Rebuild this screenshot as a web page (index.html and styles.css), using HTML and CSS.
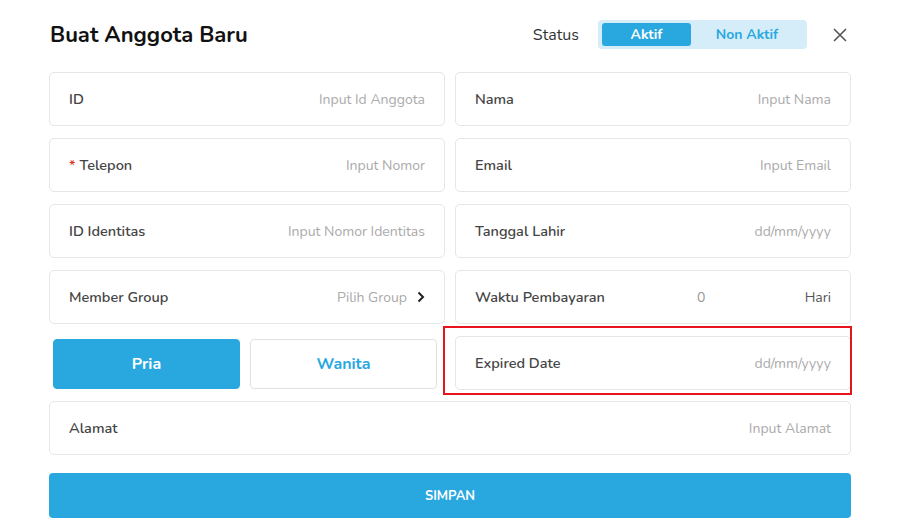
FILE: index.html
```html
<!DOCTYPE html>
<html lang="en">
<head>
    <meta charset="UTF-8">
    <title>Buat Anggota Baru</title>
    <link rel="stylesheet" href="styles.css">
</head>
<body>
    <div class="modal">
        <div class="modal-header">
            <div class="modal-title">Buat Anggota Baru</div>
            <div class="status">
                <span class="status-label">Status</span>
                <div class="status-toggle">
                    <span class="toggle-btn active">Aktif</span>
                    <span class="toggle-btn">Non Aktif</span>
                </div>
                <svg class="close-icon" width="14" height="14" viewBox="0 0 14 14">
                    <path d="M1 1 L13 13 M13 1 L1 13" stroke="#555" stroke-width="1.6" fill="none"/>
                </svg>
            </div>
        </div>

        <div class="form-grid">
            <div class="field">
                <span class="field-label">ID</span>
                <span class="field-value">Input Id Anggota</span>
            </div>
            <div class="field">
                <span class="field-label">Nama</span>
                <span class="field-value">Input Nama</span>
            </div>
            <div class="field">
                <span class="field-label"><span class="required">*</span> Telepon</span>
                <span class="field-value">Input Nomor</span>
            </div>
            <div class="field">
                <span class="field-label">Email</span>
                <span class="field-value">Input Email</span>
            </div>
            <div class="field">
                <span class="field-label">ID Identitas</span>
                <span class="field-value">Input Nomor Identitas</span>
            </div>
            <div class="field">
                <span class="field-label">Tanggal Lahir</span>
                <span class="field-value">dd/mm/yyyy</span>
            </div>
            <div class="field">
                <span class="field-label">Member Group</span>
                <span class="field-value">Pilih Group
                    <svg class="chevron" width="8" height="12" viewBox="0 0 8 12">
                        <path d="M1.5 1.5 L6 6 L1.5 10.5" stroke="#222" stroke-width="2" fill="none"/>
                    </svg>
                </span>
            </div>
            <div class="field">
                <span class="field-label">Waktu Pembayaran</span>
                <span class="field-days">0</span>
                <span class="field-unit">Hari</span>
            </div>
            <div class="gender">
                <div class="gender-btn selected">Pria</div>
                <div class="gender-btn">Wanita</div>
            </div>
            <div class="field highlighted">
                <span class="field-label">Expired Date</span>
                <span class="field-value">dd/mm/yyyy</span>
            </div>
            <div class="field wide">
                <span class="field-label">Alamat</span>
                <span class="field-value">Input Alamat</span>
            </div>
        </div>

        <button class="save-btn">SIMPAN</button>
    </div>
</body>
</html>
```

FILE: styles.css
```css
body {
    margin: 0;
    background: #fff;
    font-family: 'Nunito', 'Lato', 'Open Sans', sans-serif;
    color: #444;
}

.modal {
    width: 802px;
    padding: 20px 0 0 49px;
}

.modal-header {
    display: flex;
    align-items: center;
    justify-content: space-between;
    height: 29px;
    margin-bottom: 23px;
}

.modal-title {
    font-size: 22px;
    font-weight: 700;
    color: #111;
    padding-left: 1px;
}

.status {
    display: flex;
    align-items: center;
}

.status-label {
    font-size: 16px;
    color: #333;
    margin-right: 19px;
}

.status-toggle {
    display: flex;
    width: 201px;
    height: 23px;
    padding: 3px 4px;
    background: #d5edf9;
    border-radius: 4px;
}

.toggle-btn {
    flex: 1;
    display: flex;
    align-items: center;
    justify-content: center;
    font-size: 14px;
    font-weight: 700;
    color: #29a8df;
    border-radius: 3px;
}

.toggle-btn.active {
    flex: 0 0 89px;
    background: #29a8df;
    color: #fff;
}

.close-icon {
    margin-left: 26px;
    margin-right: 4px;
}

.form-grid {
    display: grid;
    grid-template-columns: 1fr 1fr;
    column-gap: 10px;
    row-gap: 12px;
}

.field {
    position: relative;
    display: flex;
    align-items: center;
    justify-content: space-between;
    height: 52px;
    padding: 0 19px 0 19px;
    border: 1px solid #e6e6e6;
    border-radius: 5px;
    font-size: 14px;
}

.field.wide {
    grid-column: 1 / 3;
    margin-top: -1px;
}

.field-label {
    font-size: 14.5px;
    font-weight: 600;
    color: #444;
}

.required {
    color: #e0302a;
}

.field-value {
    display: flex;
    align-items: center;
    color: #aaa;
}

.chevron {
    margin-left: 10px;
}

.field-days {
    color: #999;
    margin-left: 92px;
}

.field-unit {
    color: #555;
    margin-left: auto;
}

.highlighted::after {
    content: "";
    position: absolute;
    top: -11px;
    left: -13px;
    right: -2px;
    bottom: -6px;
    border: 2px solid #e8141b;
}

.gender {
    display: flex;
    gap: 10px;
    padding: 3px 8px 1px 4px;
}

.gender-btn {
    flex: 1;
    display: flex;
    align-items: center;
    justify-content: center;
    border: 1px solid #e0e0e0;
    border-radius: 4px;
    font-size: 16px;
    font-weight: 700;
    color: #29a8df;
    background: #fff;
}

.gender-btn.selected {
    background: #29a8df;
    border-color: #29a8df;
    color: #fff;
}

.save-btn {
    display: block;
    width: 802px;
    height: 45px;
    margin-top: 18px;
    border: none;
    border-radius: 4px;
    background: #29a8df;
    color: #fff;
    font-family: inherit;
    font-size: 13px;
    font-weight: 700;
}
```
